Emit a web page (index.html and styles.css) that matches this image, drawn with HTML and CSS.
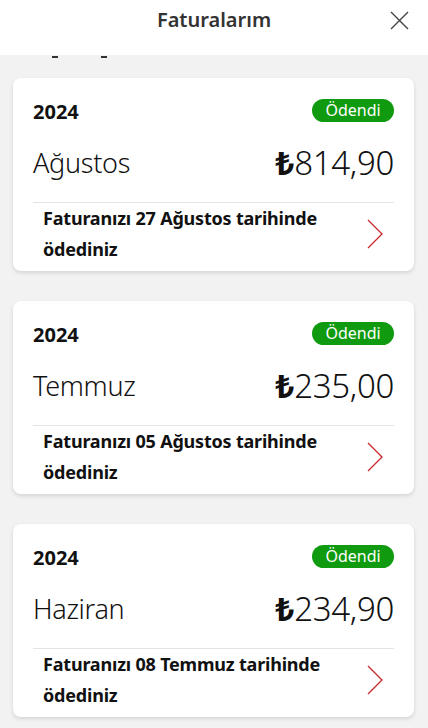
FILE: index.html
```html
<!DOCTYPE html>
<html lang="tr">

<head>
    <meta charset="UTF-8">
    <meta name="viewport" content="width=device-width, initial-scale=1.0">
    <title>Faturalarım</title>
    <link rel="stylesheet" href="styles.css">
</head>

<body>
    <div class="page">
        <div class="top">
            <h1 class="title">Faturalarım</h1>
            <span class="close">
                <svg width="19" height="19" viewBox="0 0 19 19">
                    <path d="M1 1 L18 18 M18 1 L1 18" stroke="#444" stroke-width="1.4" fill="none" />
                </svg>
            </span>
        </div>
        <div class="main">
            <div class="cut">
                <i></i>
                <i></i>
            </div>
            <ul class="list">
                <li class="card">
                    <div class="row">
                        <span class="year">2024</span>
                        <span class="badge">Ödendi</span>
                    </div>
                    <div class="row">
                        <span class="month">Ağustos</span>
                        <span class="price"><b>₺</b>814,90</span>
                    </div>
                    <div class="foot">
                        <p class="info">Faturanızı 27 Ağustos tarihinde ödediniz</p>
                        <svg class="arrow" width="18" height="32" viewBox="0 0 18 32">
                            <path d="M2 2 L16 16 L2 30" stroke="#c8262c" stroke-width="1.3" fill="none" />
                        </svg>
                    </div>
                </li>
                <li class="card">
                    <div class="row">
                        <span class="year">2024</span>
                        <span class="badge">Ödendi</span>
                    </div>
                    <div class="row">
                        <span class="month">Temmuz</span>
                        <span class="price"><b>₺</b>235,00</span>
                    </div>
                    <div class="foot">
                        <p class="info">Faturanızı 05 Ağustos tarihinde ödediniz</p>
                        <svg class="arrow" width="18" height="32" viewBox="0 0 18 32">
                            <path d="M2 2 L16 16 L2 30" stroke="#c8262c" stroke-width="1.3" fill="none" />
                        </svg>
                    </div>
                </li>
                <li class="card">
                    <div class="row">
                        <span class="year">2024</span>
                        <span class="badge">Ödendi</span>
                    </div>
                    <div class="row">
                        <span class="month">Haziran</span>
                        <span class="price"><b>₺</b>234,90</span>
                    </div>
                    <div class="foot">
                        <p class="info">Faturanızı 08 Temmuz tarihinde ödediniz</p>
                        <svg class="arrow" width="18" height="32" viewBox="0 0 18 32">
                            <path d="M2 2 L16 16 L2 30" stroke="#c8262c" stroke-width="1.3" fill="none" />
                        </svg>
                    </div>
                </li>
            </ul>
        </div>
    </div>
</body>

</html>
```

FILE: styles.css
```css
* {
    margin: 0;
    padding: 0;
    box-sizing: border-box;
}

body {
    font-family: "Noto Sans", "Open Sans", sans-serif;
    color: #111;
    background-color: #f2f2f2;
}

.page {
    height: 728px;
    overflow: hidden;
    display: flex;
    flex-direction: column;
}

.top {
    height: 55px;
    flex-shrink: 0;
    background-color: #fff;
    display: flex;
    justify-content: center;
    position: relative;
}

.title {
    font-size: 20px;
    font-weight: 600;
    color: #333;
    line-height: 40px;
}

.close {
    position: absolute;
    right: 19px;
    top: 11px;
    display: flex;
}

.main {
    flex: 1;
    overflow: hidden;
}

/* hidden heading scrolled under the bar */
.cut {
    height: 6px;
    display: flex;
    gap: 43px;
    padding: 1px 0 0 52px;
}

.cut i {
    width: 6px;
    height: 2px;
    background-color: #333;
}

.list {
    list-style: none;
    padding: 17px 14px 0 13px;
    display: flex;
    flex-direction: column;
    gap: 30px;
}

.card {
    background-color: #fff;
    border-radius: 8px;
    box-shadow: 0 2px 4px rgba(0, 0, 0, .12);
    padding: 20px 20px 6px;
    height: 193px;
}

.row {
    display: flex;
    justify-content: space-between;
    align-items: center;
}

.year {
    font-size: 20px;
    font-weight: 700;
    line-height: 23px;
    padding-top: 2px;
}

.badge {
    background-color: #0f9a10;
    color: #fff;
    font-size: 16px;
    line-height: 23px;
    height: 23px;
    border-radius: 12px;
    width: 82px;
    text-align: center;
}

.month {
    font-size: 27px;
    font-weight: 300;
    letter-spacing: -.3px;
}

.price {
    font-size: 33px;
    font-weight: 300;
    letter-spacing: -.3px;
}

.price b {
    font-weight: 700;
}

.row+.row {
    height: 80px;
    border-bottom: 1px solid #e4e4e4;
}

.foot {
    display: flex;
    align-items: center;
    justify-content: space-between;
    padding-left: 10px;
    padding-right: 10px;
}

.info {
    font-size: 18px;
    font-weight: 700;
    line-height: 31px;
    width: 310px;
    letter-spacing: -.2px;
}

.arrow {
    flex-shrink: 0;
}
```
